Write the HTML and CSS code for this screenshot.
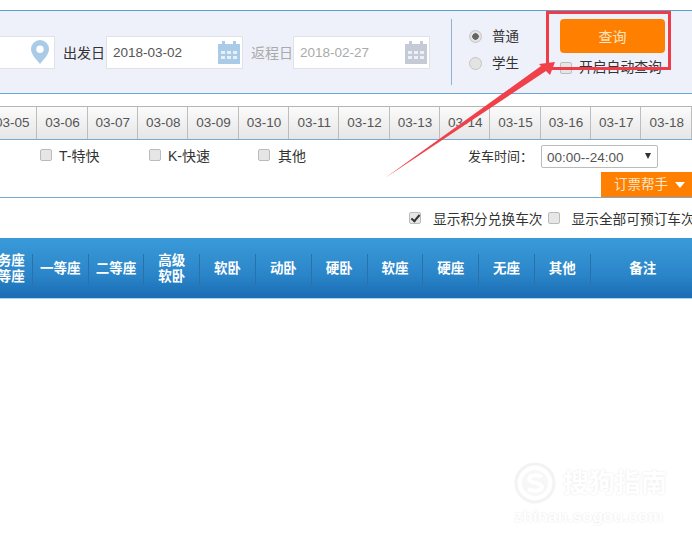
FILE: index.html
```html
<!doctype html>
<html>
  <head>
    <meta charset="utf-8">
    <link rel="stylesheet" href="styles.css">
  </head>
  <body>
    <div class="search-panel">
      <div class="text-box from-box">
        <svg class="pin" width="20" height="26" viewBox="0 0 20 26"><path fill="#a9cbe8" d="M10 1a9 9 0 0 0-9 9c0 6 6 11 9 15 3-4 9-9 9-15a9 9 0 0 0-9-9zm0 5.500a3.700 3.700 0 1 1 0 7.400 3.700 3.700 0 0 1 0-7.400z"/></svg>
      </div>
      <span class="field-label">出发日</span>
      <div class="text-box date-box">
        <span>2018-03-02</span>
        <svg class="calendar" width="24" height="24" viewBox="0 0 24 24"><path fill="#a9cbe8" d="M1 4h4V1h3v3h8V1h3v3h4v20H1z"/><path fill="#e6f0f8" d="M4 11h4v3H4zm6 0h4v3h-4zm6 0h4v3h-4zM4 16h4v3H4zm6 0h4v3h-4zm6 0h4v3h-4z"/></svg>
      </div>
      <span class="field-label muted">返程日</span>
      <div class="text-box date-box muted">
        <span>2018-02-27</span>
        <svg class="calendar" width="24" height="24" viewBox="0 0 24 24"><path fill="#c5cbd6" d="M1 4h4V1h3v3h8V1h3v3h4v20H1z"/><path fill="#eef0f4" d="M4 11h4v3H4zm6 0h4v3h-4zm6 0h4v3h-4zM4 16h4v3H4zm6 0h4v3h-4zm6 0h4v3h-4z"/></svg>
      </div>
      <div class="ticket-type">
        <label class="radio-row"><i class="radio on"></i>普通</label>
        <label class="radio-row"><i class="radio"></i>学生</label>
      </div>
      <div class="query-col">
        <button class="query-btn">查询</button>
        <label class="auto-query"><i class="check"></i>开启自动查询</label>
      </div>
    </div>

    <ul class="date-tabs">
      <li>03-05</li><li>03-06</li><li>03-07</li><li>03-08</li><li>03-09</li><li>03-10</li><li>03-11</li><li>03-12</li><li>03-13</li><li>03-14</li><li>03-15</li><li>03-16</li><li>03-17</li><li>03-18</li>
    </ul>

    <div class="filter-row">
      <div class="train-types">
        <label class="train-type"><i class="check"></i>T-特快</label>
        <label class="train-type"><i class="check"></i>K-快速</label>
        <label class="train-type"><i class="check"></i>其他</label>
      </div>
      <div class="filter-right">
        <div class="depart-time">
          <span>发车时间：</span>
          <div class="time-select">00:00--24:00<b></b></div>
        </div>
        <div class="helper-tab">订票帮手<b></b></div>
      </div>
    </div>

    <div class="option-row">
      <label class="option"><i class="check checked"></i>显示积分兑换车次</label>
      <label class="option"><i class="check"></i>显示全部可预订车次</label>
    </div>

    <div class="table-head">
      <div>商务座<br>特等座</div>
      <div>一等座</div>
      <div>二等座</div>
      <div>高级<br>软卧</div>
      <div>软卧</div>
      <div>动卧</div>
      <div>硬卧</div>
      <div>软座</div>
      <div>硬座</div>
      <div>无座</div>
      <div>其他</div>
      <div>备注</div>
    </div>

    <!-- annotation drawn on top of the screenshot -->
    <div class="mark-box"></div>
    <svg class="mark-arrow" width="692" height="551" viewBox="0 0 692 551"><path fill="#f0414a" d="M385 178 L541 66 L539 64 L555 62 L550 75 L546 71 Z"/></svg>

    <div class="watermark">
      <svg width="42" height="42" viewBox="0 0 42 42"><circle cx="21" cy="21" r="19" fill="#fff" stroke="#f3f3f3" stroke-width="3"/><circle cx="21" cy="21" r="13" fill="#f7f7f7"/><path fill="none" stroke="#fff" stroke-width="4" d="M28 15c-4-3-13-2-13 2s13 4 13 8-9 5-14 2"/></svg>
      <div class="wm-name">搜狗指南</div>
      <div class="wm-url">zhinan.sogou.com</div>
    </div>
  </body>
</html>
```

FILE: styles.css
```css
html, body {
  margin: 0;
  padding: 0;
  height: 100%;
  overflow: hidden;
  background: #fff;
}

body {
  width: 692px;
  height: 551px;
  position: relative;
  padding-top: 10px;
  box-sizing: border-box;
  font-family: "Liberation Sans", "Noto Sans CJK SC", sans-serif;
  font-size: 13px;
  color: #333;
}

/* search panel */
.search-panel {
  height: 84px;
  box-sizing: border-box;
  border-top: 1px solid #5d9ecb;
  border-bottom: 1px solid #6ca6d2;
  background: #eef1f9;
  display: flex;
  align-items: center;
}

.text-box {
  height: 33px;
  box-sizing: border-box;
  background: #fff;
  border: 1px solid #dfe2e8;
  display: flex;
  align-items: center;
  justify-content: space-between;
  color: #555;
}

.from-box {
  width: 60px;
  margin-left: -5px;
  justify-content: flex-end;
  padding-right: 4px;
}

.date-box {
  width: 137px;
  padding: 0 1px 0 6px;
  font-size: 13.500px;
}

.date-box.muted {
  color: #aaa;
}

.field-label {
  font-size: 14px;
  margin-left: 8px;
  margin-right: 1px;
}

.field-label.muted {
  color: #aaa;
  margin-left: 8px;
  margin-right: 0;
}

.ticket-type {
  height: 66px;
  margin-left: 21px;
  padding-left: 17px;
  border-left: 1px solid #8fb5d3;
  display: flex;
  flex-direction: column;
  justify-content: center;
  gap: 9px;
  padding-bottom: 4px;
  box-sizing: border-box;
}

.radio-row {
  display: flex;
  align-items: center;
  gap: 10px;
  font-size: 13.500px;
  line-height: 18px;
}

.radio {
  width: 13px;
  height: 13px;
  border-radius: 50%;
  border: 1px solid #c4c4c4;
  background: #e3e3e3;
  box-sizing: border-box;
}

.radio.on {
  background: radial-gradient(circle, #666 0 3px, #e3e3e3 3.500px);
}

.query-col {
  margin-left: 41px;
  align-self: flex-start;
  margin-top: 8px;
  display: flex;
  flex-direction: column;
  gap: 8px;
}

.query-btn {
  width: 105px;
  height: 34px;
  border: 0;
  padding: 0;
  border-radius: 4px;
  background: #ff8000;
  color: #fde5c6;
  font-family: inherit;
  font-size: 14px;
}

.auto-query {
  display: flex;
  align-items: center;
  gap: 7px;
  font-size: 13.800px;
  line-height: 14px;
  white-space: nowrap;
}

.check {
  flex: none;
  width: 12px;
  height: 12px;
  box-sizing: border-box;
  border: 1px solid #bbb;
  border-radius: 2px;
  background: #e6e6e6;
  position: relative;
}

.check.checked::after {
  content: "";
  position: absolute;
  left: 3px;
  top: 0;
  width: 3px;
  height: 7px;
  border: solid #333;
  border-width: 0 2px 2px 0;
  transform: rotate(40deg);
}

/* date strip */
.date-tabs {
  list-style: none;
  margin: 12px 0 0 -13px;
  padding: 0;
  width: 720px;
  height: 34px;
  box-sizing: border-box;
  border-top: 1px solid #b5b5b5;
  border-bottom: 1px solid #76aad4;
  display: grid;
  grid-template-columns: repeat(14, 50.350px);
}

.date-tabs li {
  box-sizing: border-box;
  border-right: 1px solid #bdbdbd;
  padding-left: 1px;
  background: linear-gradient(#fbfbfb, #e6e6e6);
  text-align: center;
  line-height: 32px;
  font-size: 13.500px;
  color: #555;
}

/* filters */
.filter-row {
  height: 58px;
  box-sizing: border-box;
  border-bottom: 1px solid #76aad4;
  display: flex;
  justify-content: space-between;
}

.train-types {
  display: flex;
  padding: 7px 0 0 40px;
}

.train-type {
  width: 109px;
  height: 16px;
  display: flex;
  align-items: center;
  gap: 7px;
  font-size: 14px;
}

.train-type:last-child {
  gap: 8px;
}

.filter-right {
  display: flex;
  flex-direction: column;
  align-items: flex-end;
  padding-top: 5px;
}

.depart-time {
  display: flex;
  align-items: center;
  margin-right: 34px;
  font-size: 13px;
  gap: 8px;
}

.depart-time span {
  margin-top: -2px;
}

.time-select {
  width: 117px;
  height: 23px;
  box-sizing: border-box;
  border: 1px solid #bbb;
  border-radius: 2px;
  padding-left: 5px;
  line-height: 23px;
  font-size: 13.500px;
  color: #555;
  position: relative;
}

.time-select b {
  position: absolute;
  right: 6px;
  top: 7px;
  border: solid transparent;
  border-width: 6px 3.500px 0;
  border-top-color: #333;
}

.helper-tab {
  width: 91px;
  height: 26px;
  margin-top: 4px;
  box-sizing: border-box;
  padding-left: 13px;
  background: #ff8000;
  color: #fde5c6;
  font-size: 13.500px;
  line-height: 25px;
  display: flex;
  align-items: center;
  gap: 7px;
}

.helper-tab b {
  border: solid transparent;
  border-width: 6px 5px 0;
  border-top-color: #fff;
}

/* options */
.option-row {
  height: 40px;
  display: flex;
  justify-content: flex-start;
  padding-left: 409px;
  align-items: center;
  white-space: nowrap;
}

.option {
  display: flex;
  align-items: center;
  font-size: 13.700px;
  gap: 12px;
  margin-right: 5px;
}

/* table header */
.table-head {
  width: 730px;
  height: 61px;
  box-sizing: border-box;
  margin-left: -23px;
  padding-top: 1px;
  border-bottom: 1px solid #a9d4f0;
  background: linear-gradient(#3a9ad8, #2b86c9 60%, #1a6cb4);
  display: grid;
  grid-template-columns: repeat(11, 55.800px) 104px;
  color: #fff;
  font-weight: bold;
  font-size: 13.500px;
  line-height: 16px;
  align-items: center;
}

.table-head div {
  text-align: center;
  height: 30px;
  display: flex;
  align-items: center;
  justify-content: center;
  border-right: 1px solid #2a70ab;
  box-sizing: border-box;
}

.table-head div:last-child {
  border-right: 0;
}

/* red annotation */
.mark-box {
  position: absolute;
  left: 546px;
  top: 11px;
  width: 125px;
  height: 59px;
  box-sizing: border-box;
  border: 3px solid #ee3d48;
}

.mark-arrow {
  position: absolute;
  left: 0;
  top: 0;
}

/* watermark */
.watermark {
  position: absolute;
  left: 514px;
  top: 462px;
  width: 160px;
  display: flex;
  flex-wrap: wrap;
  align-items: center;
  column-gap: 7px;
  row-gap: 3px;
  color: #fff;
  text-shadow: 0 0 2px #e2e2e2;
}

.wm-name {
  font-size: 26px;
  font-weight: bold;
  line-height: 42px;
  white-space: nowrap;
}

.wm-url {
  font-size: 17px;
  font-weight: bold;
  line-height: 20px;
}
```
